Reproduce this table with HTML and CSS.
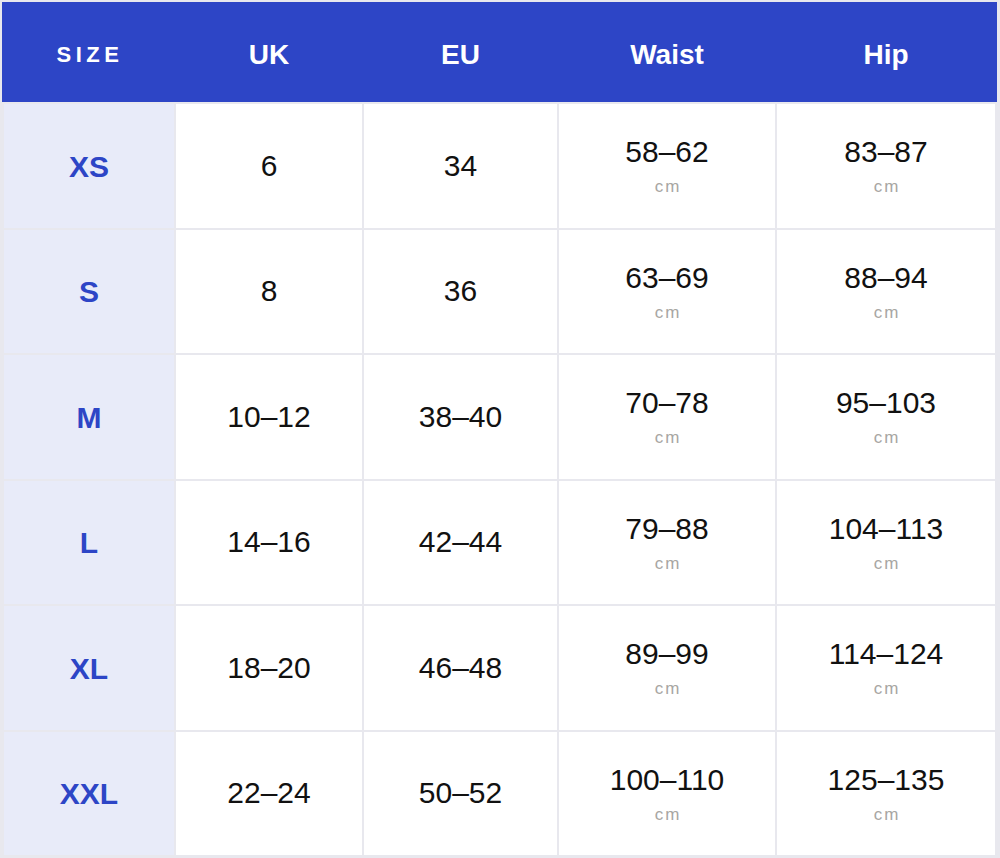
FILE: index.html
```html
<!DOCTYPE html>
<html lang="en">
<head>
<meta charset="utf-8">
<title>Size chart</title>
<link rel="stylesheet" href="styles.css">
</head>
<body>
<div class="chart">
  <div class="head">
    <div class="hcell hcell-size">Size</div>
    <div class="hcell">UK</div>
    <div class="hcell">EU</div>
    <div class="hcell">Waist</div>
    <div class="hcell">Hip</div>
  </div>
  <div class="body">
    <div class="cell size">XS</div>
    <div class="cell"><span class="val">6</span></div>
    <div class="cell"><span class="val">34</span></div>
    <div class="cell"><span class="val">58–62</span><span class="unit">cm</span></div>
    <div class="cell"><span class="val">83–87</span><span class="unit">cm</span></div>

    <div class="cell size">S</div>
    <div class="cell"><span class="val">8</span></div>
    <div class="cell"><span class="val">36</span></div>
    <div class="cell"><span class="val">63–69</span><span class="unit">cm</span></div>
    <div class="cell"><span class="val">88–94</span><span class="unit">cm</span></div>

    <div class="cell size">M</div>
    <div class="cell"><span class="val">10–12</span></div>
    <div class="cell"><span class="val">38–40</span></div>
    <div class="cell"><span class="val">70–78</span><span class="unit">cm</span></div>
    <div class="cell"><span class="val">95–103</span><span class="unit">cm</span></div>

    <div class="cell size">L</div>
    <div class="cell"><span class="val">14–16</span></div>
    <div class="cell"><span class="val">42–44</span></div>
    <div class="cell"><span class="val">79–88</span><span class="unit">cm</span></div>
    <div class="cell"><span class="val">104–113</span><span class="unit">cm</span></div>

    <div class="cell size">XL</div>
    <div class="cell"><span class="val">18–20</span></div>
    <div class="cell"><span class="val">46–48</span></div>
    <div class="cell"><span class="val">89–99</span><span class="unit">cm</span></div>
    <div class="cell"><span class="val">114–124</span><span class="unit">cm</span></div>

    <div class="cell size">XXL</div>
    <div class="cell"><span class="val">22–24</span></div>
    <div class="cell"><span class="val">50–52</span></div>
    <div class="cell"><span class="val">100–110</span><span class="unit">cm</span></div>
    <div class="cell"><span class="val">125–135</span><span class="unit">cm</span></div>
  </div>
</div>
</body>
</html>
```

FILE: styles.css
```css
* { box-sizing: border-box; }

html, body {
  margin: 0;
  padding: 0;
  background: #e8e8ee;
}

body {
  font-family: "Liberation Sans", Arial, sans-serif;
  color: #111;
}

.chart {
  width: 1000px;
  height: 858px;
  padding: 2px 3px 3px 2px;
  display: flex;
  flex-direction: column;
  gap: 2px;
}

.head,
.body {
  display: grid;
  grid-template-columns: 170px 186px 193px 216px 1fr;
  column-gap: 2px;
}

.head {
  height: 100px;
  background: #2d45c6;
  padding: 0 2px;
}

.hcell {
  display: flex;
  align-items: center;
  justify-content: center;
  color: #ffffff;
  font-size: 28px;
  font-weight: bold;
  padding-top: 5px;
}

.hcell-size {
  font-size: 22px;
  text-transform: uppercase;
  letter-spacing: 4.5px;
  padding-left: 2px;
}

.body {
  flex: 1;
  grid-auto-rows: 1fr;
  row-gap: 2px;
  padding: 0 2px;
}

.cell {
  background: #ffffff;
  display: flex;
  flex-direction: column;
  align-items: center;
  justify-content: center;
}

.cell.size {
  background: #e8ebf9;
  color: #2d45c6;
  font-size: 30px;
  font-weight: bold;
  line-height: 34px;
  padding-top: 2px;
}

.val {
  font-size: 30px;
  line-height: 34px;
  color: #111;
}

.unit {
  font-size: 17px;
  line-height: 18px;
  letter-spacing: 2px;
  color: #a8a6a3;
  margin-top: 9px;
  margin-right: -2px;
}
```
